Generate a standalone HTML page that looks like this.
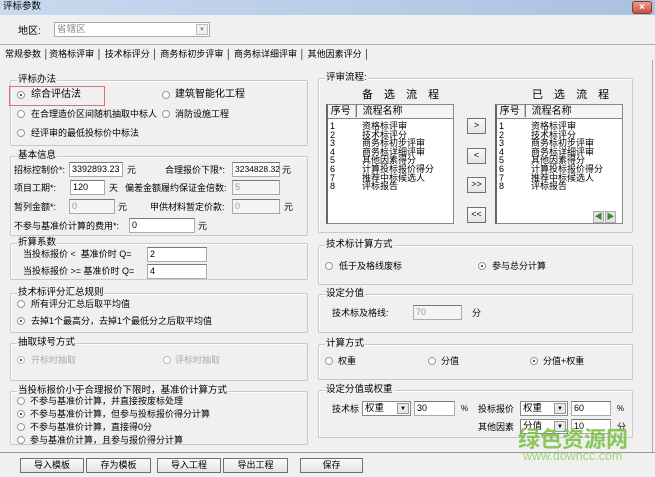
<!DOCTYPE html>
<html><head><meta charset="utf-8"><style>
*{margin:0;padding:0;box-sizing:border-box}
body{width:655px;height:477px;background:#f0f0f0;font-family:"Liberation Sans","Noto Sans CJK SC",sans-serif;font-size:9px;color:#000;position:relative;overflow:hidden}
.a{position:absolute;white-space:nowrap;line-height:12px}
.g{position:absolute;border:1px solid #c9c9c9;border-radius:2px;box-shadow:1px 1px 0 #fff inset}
.g>.l{position:absolute;top:-7px;left:6px;background:#f0f0f0;padding:0 1px;line-height:12px;font-size:9.5px}
.in{position:absolute;background:#fff;border:1px solid #aaa;border-top-color:#777;height:15px;font-size:9px;line-height:13px;padding-left:2px}
.dis{color:#999;background:#f4f4f4}
.r{position:absolute;width:8px;height:8px;border:1px solid #999;border-radius:50%;background:#fff}
.r.on::after{content:"";position:absolute;left:2px;top:2px;width:2px;height:2px;border-radius:50%;background:#222}
.btn{position:absolute;border:1px solid #707070;background:linear-gradient(#fbfbfb,#e3e3e3);text-align:center;line-height:13px;height:15px}
.cb{position:absolute;background:#fff;border:1px solid #888;height:15px;font-size:9.5px;line-height:13px;padding-left:2px}
.cb i{position:absolute;right:1px;top:1px;width:12px;height:11px;background:#e8e8e8;border:1px solid #999;font-style:normal;font-size:6px;text-align:center;line-height:10px}
.lst{position:absolute;background:#fff;border:1px solid #888;border-left:2px solid #666}
.lst .h{position:absolute;top:0;left:0;right:0;height:14px;border-bottom:1px solid #888;background:#f4f4f4;font-size:10px;line-height:13px}
.lst .it{position:absolute;font-size:9px;line-height:8.6px}
</style></head><body>
<div style="position:absolute;left:0;top:0;width:655px;height:15px;background:linear-gradient(90deg,#c8d9ee,#b7cce6 60%,#a9c1e0)"></div>
<div class="a" style="left:3px;top:1px;font-size:9.5px">评标参数</div>
<div style="position:absolute;left:632px;top:1px;width:20px;height:13px;background:linear-gradient(#e9a08f,#c7503b);border:1px solid #8a3a2c;border-radius:3px;color:#fff;font-size:10px;text-align:center;line-height:11px;font-weight:bold">×</div>

<div class="a" style="left:18px;top:26px;font-size:10px">地区:</div>
<div class="cb" style="left:54px;top:22px;width:156px;color:#888;border-color:#aaa">省辖区<i style="background:#f0f0f0;border-color:#bbb;color:#888">▼</i></div>

<div style="position:absolute;left:0;top:44px;width:655px;border-top:1px solid #aaa"></div>
<div class="a" style="left:5px;top:48px;font-size:9px">常规参数 │资格标评审 │ 技术标评分 │ 商务标初步评审 │ 商务标详细评审 │ 其他因素评分 │</div>
<div style="position:absolute;left:652px;top:60px;height:392px;border-left:1px solid #aaa"></div>
<div style="position:absolute;left:0;top:452px;width:655px;border-top:1px solid #999"></div>

<!-- left -->
<div class="g" style="left:10px;top:80px;width:298px;height:66px"><span class="l">评标办法</span></div>
<div style="position:absolute;left:9px;top:86px;width:96px;height:20px;border:1px solid #e07070"></div>
<div class="r on" style="left:17px;top:91px"></div><div class="a" style="left:31px;top:89px;font-size:10px">综合评估法</div>
<div class="r" style="left:162px;top:91px"></div><div class="a" style="left:175px;top:89px;font-size:10px">建筑智能化工程</div>
<div class="r" style="left:17px;top:110px"></div><div class="a" style="left:31px;top:108px">在合理造价区间随机抽取中标人</div>
<div class="r" style="left:162px;top:110px"></div><div class="a" style="left:175px;top:108px">消防设施工程</div>
<div class="r" style="left:17px;top:129px"></div><div class="a" style="left:31px;top:127px">经评审的最低投标价中标法</div>

<div class="g" style="left:10px;top:156px;width:298px;height:80px"><span class="l">基本信息</span></div>
<div class="a" style="left:14px;top:164px">招标控制价*:</div><div class="in" style="left:69px;top:162px;width:54px">3392893.23</div><div class="a" style="left:127px;top:164px">元</div>
<div class="a" style="left:165px;top:164px">合理报价下限*:</div><div class="in" style="left:232px;top:162px;width:48px;font-size:8.5px">3234828.32</div><div class="a" style="left:282px;top:164px">元</div>
<div class="a" style="left:14px;top:182px">项目工期*:</div><div class="in" style="left:70px;top:180px;width:35px">120</div><div class="a" style="left:109px;top:182px">天</div>
<div class="a" style="left:125px;top:182px">偏差金额履约保证金倍数:</div><div class="in dis" style="left:232px;top:180px;width:48px">5</div>
<div class="a" style="left:14px;top:201px">暂列金额*:</div><div class="in dis" style="left:69px;top:199px;width:46px">0</div><div class="a" style="left:118px;top:201px">元</div>
<div class="a" style="left:150px;top:201px">甲供材料暂定价款:</div><div class="in dis" style="left:232px;top:199px;width:48px">0</div><div class="a" style="left:284px;top:201px">元</div>
<div class="a" style="left:14px;top:220px">不参与基准价计算的费用*:</div><div class="in" style="left:129px;top:218px;width:66px">0</div><div class="a" style="left:198px;top:220px">元</div>

<div class="g" style="left:10px;top:243px;width:298px;height:37px"><span class="l">折算系数</span></div>
<div class="a" style="left:23px;top:248px">当投标报价 &lt;&nbsp; 基准价时 Q=</div><div class="in" style="left:147px;top:247px;width:60px">2</div>
<div class="a" style="left:23px;top:265px">当投标报价 &gt;= 基准价时 Q=</div><div class="in" style="left:147px;top:264px;width:60px">4</div>

<div class="g" style="left:10px;top:293px;width:298px;height:40px"><span class="l">技术标评分汇总规则</span></div>
<div class="r" style="left:17px;top:300px"></div><div class="a" style="left:31px;top:298px">所有评分汇总后取平均值</div>
<div class="r on" style="left:17px;top:317px"></div><div class="a" style="left:31px;top:315px">去掉1个最高分，去掉1个最低分之后取平均值</div>

<div class="g" style="left:10px;top:343px;width:298px;height:38px"><span class="l">抽取球号方式</span></div>
<div class="r on" style="left:17px;top:356px;border-color:#bbb"></div><div class="a" style="left:31px;top:354px;color:#aaa">开标时抽取</div>
<div class="r" style="left:163px;top:356px;border-color:#bbb"></div><div class="a" style="left:175px;top:354px;color:#aaa">评标时抽取</div>

<div class="g" style="left:10px;top:391px;width:298px;height:54px"><span class="l">当投标报价小于合理报价下限时，基准价计算方式</span></div>
<div class="r" style="left:17px;top:397px"></div><div class="a" style="left:30px;top:395px">不参与基准价计算，并直接按废标处理</div>
<div class="r on" style="left:17px;top:410px"></div><div class="a" style="left:30px;top:408px">不参与基准价计算，但参与投标报价得分计算</div>
<div class="r" style="left:17px;top:423px"></div><div class="a" style="left:30px;top:421px">不参与基准价计算，直接得0分</div>
<div class="r" style="left:17px;top:436px"></div><div class="a" style="left:30px;top:434px">参与基准价计算，且参与报价得分计算</div>

<!-- right -->
<div class="g" style="left:318px;top:78px;width:315px;height:155px"><span class="l">评审流程:</span></div>
<div class="a" style="left:362px;top:89px;font-size:11px;letter-spacing:4px">备 选 流 程</div>
<div class="a" style="left:532px;top:89px;font-size:11px;letter-spacing:4px">已 选 流 程</div>
<div class="lst" style="left:326px;top:104px;width:128px;height:120px"><div class="h">&nbsp;序号 │ 流程名称</div>
<div class="it" style="left:2px;top:17px">1<br>2<br>3<br>4<br>5<br>6<br>7<br>8</div>
<div class="it" style="left:34px;top:17px">资格标评审<br>技术标评分<br>商务标初步评审<br>商务标详细评审<br>其他因素得分<br>计算投标报价得分<br>推荐中标候选人<br>评标报告</div></div>
<div class="lst" style="left:495px;top:104px;width:128px;height:120px"><div class="h">&nbsp;序号 │ 流程名称</div>
<div class="it" style="left:2px;top:17px">1<br>2<br>3<br>4<br>5<br>6<br>7<br>8</div>
<div class="it" style="left:34px;top:17px">资格标评审<br>技术标评分<br>商务标初步评审<br>商务标详细评审<br>其他因素得分<br>计算投标报价得分<br>推荐中标候选人<br>评标报告</div>
<div style="position:absolute;left:96px;top:106px;width:11px;height:12px;background:#e4e4e4;border:1px solid #aaa;color:#3a8a3a;font-size:8px;line-height:10px;text-align:center">◀</div>
<div style="position:absolute;left:108px;top:106px;width:11px;height:12px;background:#e4e4e4;border:1px solid #aaa;color:#3a8a3a;font-size:8px;line-height:10px;text-align:center">▶</div></div>
<div class="btn" style="left:467px;top:118px;width:19px;height:16px">&gt;</div>
<div class="btn" style="left:467px;top:148px;width:19px;height:16px">&lt;</div>
<div class="btn" style="left:467px;top:177px;width:19px;height:16px">&gt;&gt;</div>
<div class="btn" style="left:467px;top:207px;width:19px;height:16px">&lt;&lt;</div>

<div class="g" style="left:318px;top:245px;width:315px;height:40px"><span class="l">技术标计算方式</span></div>
<div class="r" style="left:325px;top:262px"></div><div class="a" style="left:339px;top:260px">低于及格线废标</div>
<div class="r on" style="left:478px;top:262px"></div><div class="a" style="left:492px;top:260px">参与总分计算</div>

<div class="g" style="left:318px;top:294px;width:315px;height:39px"><span class="l">设定分值</span></div>
<div class="a" style="left:332px;top:307px">技术标及格线:</div><div class="in dis" style="left:413px;top:305px;width:49px">70</div><div class="a" style="left:472px;top:307px">分</div>

<div class="g" style="left:318px;top:344px;width:315px;height:36px"><span class="l">计算方式</span></div>
<div class="r" style="left:325px;top:357px"></div><div class="a" style="left:338px;top:355px">权重</div>
<div class="r" style="left:428px;top:357px"></div><div class="a" style="left:441px;top:355px">分值</div>
<div class="r on" style="left:530px;top:357px"></div><div class="a" style="left:543px;top:355px">分值+权重</div>

<div class="g" style="left:318px;top:390px;width:315px;height:48px"><span class="l">设定分值或权重</span></div>
<div class="a" style="left:332px;top:403px">技术标</div><div class="cb" style="left:362px;top:401px;width:49px">权重<i>▼</i></div><div class="in" style="left:414px;top:401px;width:41px">30</div><div class="a" style="left:461px;top:403px;font-size:8px">%</div>
<div class="a" style="left:478px;top:403px">投标报价</div><div class="cb" style="left:520px;top:401px;width:48px">权重<i>▼</i></div><div class="in" style="left:571px;top:401px;width:40px">60</div><div class="a" style="left:617px;top:403px;font-size:8px">%</div>
<div class="a" style="left:478px;top:421px">其他因素</div><div class="cb" style="left:520px;top:419px;width:48px">分值<i>▼</i></div><div class="in" style="left:571px;top:419px;width:40px">10</div><div class="a" style="left:617px;top:421px">分</div>

<div class="a" style="left:518px;top:428px;font-size:22px;line-height:24px;color:#7fc24a;font-weight:bold;opacity:.9">绿色资源网</div>
<div class="a" style="left:523px;top:450px;font-size:12.5px;line-height:13px;color:#9fd57a">www.downcc.com</div>

<div class="btn" style="left:20px;top:458px;width:64px">导入模板</div>
<div class="btn" style="left:86px;top:458px;width:65px">存为模板</div>
<div class="btn" style="left:157px;top:458px;width:64px">导入工程</div>
<div class="btn" style="left:223px;top:458px;width:65px">导出工程</div>
<div class="btn" style="left:300px;top:458px;width:63px">保存</div>
</body></html>
